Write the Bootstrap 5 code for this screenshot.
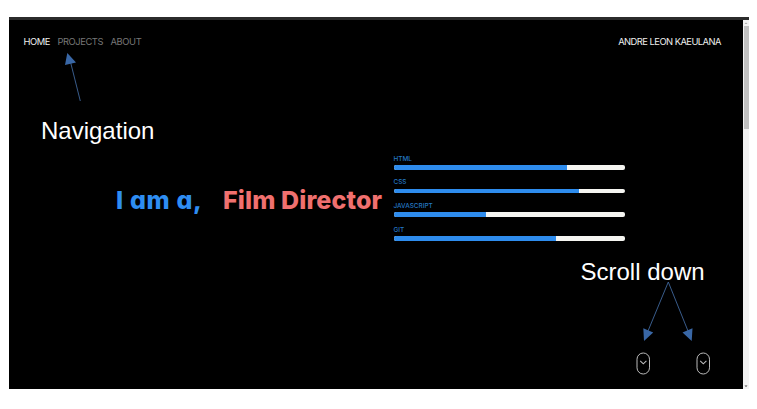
<!DOCTYPE html>
<html lang="en">
<head>
<meta charset="utf-8">
<meta name="viewport" content="width=device-width, initial-scale=1">
<title>Andre Leon Kaeulana</title>
<link href="https://cdn.jsdelivr.net/npm/bootstrap@5.3.0/dist/css/bootstrap.min.css" rel="stylesheet">
<style>
  body { font-family: Inter, "Liberation Sans", sans-serif; background: #fff; overflow: hidden; }
  .browser-frame { width: 740px; height: 372px; margin: 17px 0 0 9px; border-top: 3px solid #2b2b2b; }
  .site { background: #000; width: 734px; }
  .site-nav { padding: 15px 22px 0 14.5px; height: 30px; font-size: 9.4px; line-height: 14px; }
  .site-nav a { color: #777; text-decoration: none; white-space: nowrap; }
  .site-nav .active, .site-nav .owner { color: #eee; }
  .w-home { width: 34px; letter-spacing: -.45px; }
  .w-projects { width: 53px; letter-spacing: -.45px; }
  .w-about { letter-spacing: -.4px; }
  .site-nav .owner { letter-spacing: -.54px; }
  .hero { padding: 104px 118px 0 107px; }
  .headline { width: 277.5px; font-weight: 800; font-size: 25px; line-height: 30px; padding-top: 31px; white-space: nowrap; font-feature-settings: "cv11"; }
  .intro { color: #2e8df2; width: 107px; letter-spacing: .65px; }
  .role { color: #f0706f; letter-spacing: .12px; }
  .skills { width: 231.5px; }
  .skill { height: 23.7px; }
  .skill-name { color: #2478c4; font-size: 6.4px; line-height: 8px; font-weight: 500; height: 11px; padding-top: .5px; }
  .skills .progress { height: 4.6px; border-radius: 2px; background: #f5f5f1; }
  .skills .progress-bar { background: #2e8ced; }
  .mice { gap: 45.5px; padding: 0 33px 14.5px 0; }
  .scroll-track { width: 6px; background: #f2f2f2; }
  .track-thumb { height: 103px; width: 5px; background: #c1c1c1; }
  .note { position: absolute; color: #fff; font: 24px/28px "Liberation Sans", Arial, sans-serif; white-space: nowrap; }
  .note-nav { left: 41px; top: 117px; }
  .note-scroll { left: 580.5px; top: 258px; }
  .arrows { position: absolute; left: 0; top: 0; pointer-events: none; }
</style>
<script src="https://cdn.jsdelivr.net/npm/bootstrap@5.3.0/dist/js/bootstrap.bundle.min.js"></script>
</head>
<body>
<div class="browser-frame d-flex">
  <div class="site d-flex flex-column">
    <nav class="site-nav d-flex justify-content-between">
      <div class="d-flex">
        <a class="w-home active" href="#">HOME</a>
        <a class="w-projects" href="#">PROJECTS</a>
        <a class="w-about" href="#">ABOUT</a>
      </div>
      <a class="owner" href="#">ANDRE LEON KAEULANA</a>
    </nav>
    <main class="hero d-flex">
      <h1 class="headline d-flex m-0"><span class="intro">I am a,</span><span class="role">Film Director</span></h1>
      <div class="skills">
        <div class="skill"><div class="skill-name">HTML</div><div class="progress"><div class="progress-bar" style="width:75%"></div></div></div>
        <div class="skill"><div class="skill-name">CSS</div><div class="progress"><div class="progress-bar" style="width:80%"></div></div></div>
        <div class="skill"><div class="skill-name">JAVASCRIPT</div><div class="progress"><div class="progress-bar" style="width:40%"></div></div></div>
        <div class="skill"><div class="skill-name">GIT</div><div class="progress"><div class="progress-bar" style="width:70%"></div></div></div>
      </div>
    </main>
    <div class="mice d-flex justify-content-end mt-auto">
      <svg width="14.5" height="23" viewBox="0 0 14.5 23" fill="none" stroke="#bbb"><rect x="1" y="1" width="12.5" height="21" rx="6.2"/><path d="M4.2 8.8 7.3 11.8 10.4 8.8" stroke-width="1.1"/></svg>
      <svg width="14.5" height="23" viewBox="0 0 14.5 23" fill="none" stroke="#bbb"><rect x="1" y="1" width="12.5" height="21" rx="6.2"/><path d="M4.2 8.8 7.3 11.8 10.4 8.8" stroke-width="1.1"/></svg>
    </div>
  </div>
  <div class="scroll-track d-flex flex-column align-items-center">
    <svg width="6" height="6"><path d="M1.5 4 3 2.5 4.5 4z" fill="#aaa"/></svg>
    <div class="track-thumb"></div>
    <svg class="mt-auto" width="6" height="6"><path d="M1.5 2.5h3L3 4z" fill="#444"/></svg>
  </div>
</div>
<div class="note note-nav">Navigation</div>
<div class="note note-scroll">Scroll down</div>
<svg class="arrows" width="757" height="409" fill="#3967a6" stroke="#40669b">
  <path d="M80.3 101 70.5 62M668.3 282 648 331M668.3 282 688 331" fill="none" stroke-width=".9"/>
  <path d="M67.3 53 76 62.5 65 65zM644 341 643.3 328.3 653.2 332.5zM691.7 341 682.5 332.5 692.5 328.3z" stroke="none"/>
</svg>
</body>
</html>
